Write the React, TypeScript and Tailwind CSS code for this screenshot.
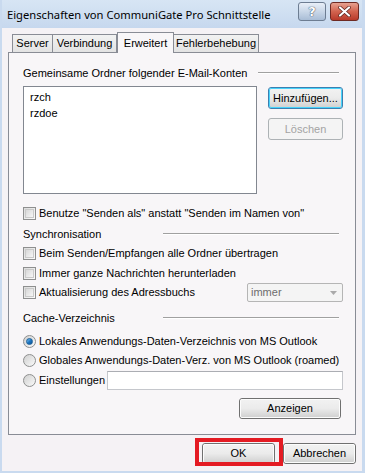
import React from "react";

const F = { fontFamily: '"Liberation Sans", Arial, sans-serif' };

function Check({ label }: { label: string }) {
  return (
    <div className="flex items-center">
      <div className="w-[13px] h-[13px] border border-[#8e8f8f] bg-gradient-to-br from-[#dcdcdc] to-[#fbfbfb] p-[1px]">
        <div className="w-full h-full border border-[#c9c9c9] bg-gradient-to-br from-[#d8d8d8] to-[#f6f6f6]" />
      </div>
      <span className="ml-[3px]">{label}</span>
    </div>
  );
}

function Radio({ label, checked }: { label: string; checked?: boolean }) {
  return (
    <div className="flex items-center">
      <div className="w-[13px] h-[13px] rounded-full border border-[#8e8f8f] bg-gradient-to-br from-[#d0d0d0] to-[#fafafa] flex items-center justify-center">
        {checked && (
          <div className="w-[7px] h-[7px] rounded-full bg-gradient-to-br from-[#7fc5f2] via-[#1e78c4] to-[#0b4f91] border border-[#1b5f99]" />
        )}
      </div>
      <span className="ml-[3px]">{label}</span>
    </div>
  );
}

function Btn({ children, cls, focused, disabled }: { children: React.ReactNode; cls: string; focused?: boolean; disabled?: boolean }) {
  if (disabled) {
    return (
      <div className={`${cls} rounded-[3px] border border-[#adb2b5] bg-[#f4f4f4] text-[#a3a3a3] flex items-center justify-center`}>
        {children}
      </div>
    );
  }
  return (
    <div
      className={`${cls} rounded-[3px] border ${focused ? "border-[#3c7fb1]" : "border-[#707070]"} bg-gradient-to-b from-[#f2f2f2] via-[#ebebeb] to-[#cfcfcf] flex items-center justify-center text-black`}
    >
      <div className={`w-full h-full rounded-[2px] border ${focused ? "border-[#48d3fb]" : "border-[#fcfcfc]"} flex items-center justify-center`}>
        {children}
      </div>
    </div>
  );
}

function Heading({ text, lineW }: { text: string; lineW: string }) {
  return (
    <div className="flex items-center h-[14px] pr-[4px]">
      <span>{text}</span>
      <div className={`ml-auto ${lineW} h-[1px] bg-[#a0a0a0] border-b border-white box-content`} />
    </div>
  );
}

export default function App() {
  return (
    <div
      className="w-[365px] h-[473px] bg-[#f5f2f5] relative overflow-hidden text-[11px] text-black border-l-[2px] border-r-[3px] border-b-[2px] border-[#c9daef]"
      style={F}
    >
      {/* Title bar */}
      <div className="h-[28px] -ml-[2px] -mr-[3px] bg-gradient-to-b from-[#d7e5f4] via-[#cfdff1] to-[#c6d8ee] flex items-start relative">
        <span
          className="ml-[7px] mt-[7px] text-[11.2px] text-black"
          style={{ fontFamily: '"Noto Sans", "Open Sans", sans-serif' }}
        >
          Eigenschaften von CommuniGate Pro Schnittstelle
        </span>
        <div className="ml-auto mr-[6px] mt-[2px] flex gap-[4px]">
          <div className="w-[28px] h-[19px] rounded-[3px] border border-[#6d7d92] bg-gradient-to-b from-[#e8eff8] via-[#c9d7e8] to-[#a9bdd6] flex items-center justify-center">
            <span className="text-white font-bold text-[13px] leading-none" style={{ fontFamily: '"DejaVu Sans", sans-serif', textShadow: "0 0 1px #2e3f57, 0 0 1px #2e3f57" }}>?</span>
          </div>
          <div className="w-[29px] h-[19px] rounded-[3px] border border-[#6e2a23] bg-gradient-to-b from-[#e6a190] via-[#d2634f] to-[#b8392a] flex items-center justify-center">
            <svg width="13" height="11" viewBox="0 0 13 11">
              <path d="M2 1.5 L11 9.5 M11 1.5 L2 9.5" stroke="#5a231c" strokeWidth="3.6" strokeLinecap="round" />
              <path d="M2 1.5 L11 9.5 M11 1.5 L2 9.5" stroke="#ffffff" strokeWidth="2.2" strokeLinecap="round" />
            </svg>
          </div>
        </div>
      </div>

      {/* Tabs */}
      <div className="ml-[6px] mt-[4px] flex items-end h-[20px] pl-[4px] relative z-10">
        <div className="w-[41px] h-[18px] border border-b-0 border-[#898c95] bg-gradient-to-b from-[#f2f2f2] to-[#e3e3e3] flex items-center justify-center">Server</div>
        <div className="w-[64px] h-[18px] border border-b-0 border-l-0 border-[#898c95] bg-gradient-to-b from-[#f2f2f2] to-[#e3e3e3] flex items-center justify-center">Verbindung</div>
        <div className="w-[57px] h-[21px] -mb-[1px] border border-b-0 border-[#898c95] bg-[#f8f6f8] flex items-start justify-center pt-[2px]">Erweitert</div>
        <div className="w-[85px] h-[18px] border border-b-0 border-l-0 border-[#898c95] bg-gradient-to-b from-[#f2f2f2] to-[#e3e3e3] flex items-center justify-center">Fehlerbehebung</div>
      </div>

      {/* Panel */}
      <div className="ml-[6px] w-[348px] h-[383px] border border-[#898c95] bg-[#f8f6f8] pl-[14px] pr-[12px] pt-[13px] flex flex-col">
        <Heading text="Gemeinsame Ordner folgender E-Mail-Konten" lineW="w-[81px]" />

        <div className="flex mt-[6px]">
          <div className="w-[234px] h-[108px] border border-[#828790] bg-white pl-[6px] pt-[2px] flex flex-col leading-[16px]">
            <span>rzch</span>
            <span>rzdoe</span>
          </div>
          <div className="ml-auto flex flex-col gap-[9px] mt-[1px]">
            <Btn cls="w-[75px] h-[22px]" focused>Hinzufügen...</Btn>
            <Btn cls="w-[75px] h-[22px]" disabled>Löschen</Btn>
          </div>
        </div>

        <div className="mt-[13px] h-[13px] flex items-center">
          <Check label={'Benutze "Senden als" anstatt "Senden im Namen von"'} />
        </div>

        <div className="mt-[7px]">
          <Heading text="Synchronisation" lineW="w-[176px]" />
        </div>
        <div className="h-[20px] mt-[2px] flex items-center">
          <Check label="Beim Senden/Empfangen alle Ordner übertragen" />
        </div>
        <div className="h-[20px] flex items-center">
          <Check label="Immer ganze Nachrichten herunterladen" />
        </div>
        <div className="h-[19px] flex items-center">
          <Check label="Aktualisierung des Adressbuchs" />
          <div className="ml-auto w-[96px] h-[19px] rounded-[2px] border border-[#b5b5b5] bg-[#f4f4f4] flex items-center pl-[3px] pr-[5px] text-[#6d6d6d]">
            <span>immer</span>
            <svg className="ml-auto" width="7" height="4" viewBox="0 0 7 4">
              <path d="M0 0 L7 0 L3.5 4 Z" fill="#a9a9a9" />
            </svg>
          </div>
        </div>

        <div className="mt-[9px]">
          <Heading text="Cache-Verzeichnis" lineW="w-[176px]" />
        </div>
        <div className="h-[20px] mt-[6px] flex items-center">
          <Radio label="Lokales Anwendungs-Daten-Verzeichnis von MS Outlook" checked />
        </div>
        <div className="h-[19px] flex items-center">
          <Radio label="Globales Anwendungs-Daten-Verz. von MS Outlook (roamed)" />
        </div>
        <div className="h-[20px] flex items-center">
          <Radio label="Einstellungen" />
          <div className="ml-auto w-[236px] h-[19px] border border-[#c5c7cc] border-t-[#abadb3] bg-white" />
        </div>

        <div className="flex justify-end mt-[8px] pr-[2px]">
          <Btn cls="w-[102px] h-[21px]">Anzeigen</Btn>
        </div>
      </div>

      {/* Bottom buttons */}
      <div className="flex mt-[8px] pl-[200px] gap-[8px]">
        <Btn cls="w-[73px] h-[21px]">OK</Btn>
        <Btn cls="w-[73px] h-[21px]">Abbrechen</Btn>
      </div>

      {/* red annotation box */}
      <div className="absolute left-[193px] top-[438px] w-[88px] h-[28px] border-[4px] border-[#e41b23]" />
    </div>
  );
}
